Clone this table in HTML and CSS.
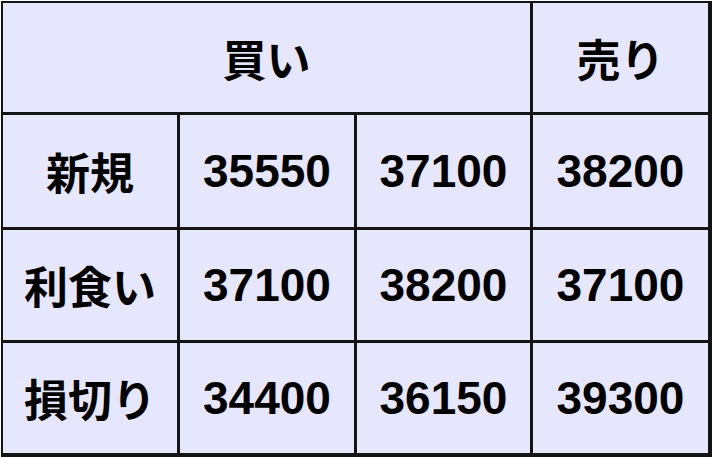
FILE: index.html
```html
<!DOCTYPE html>
<html lang="ja">
<head>
<meta charset="utf-8">
<link rel="stylesheet" href="styles.css">
</head>
<body>
<div class="table">
  <div class="cell head buy">買い</div>
  <div class="cell head">売り</div>
  <div class="cell label">新規</div>
  <div class="cell">35550</div>
  <div class="cell">37100</div>
  <div class="cell">38200</div>
  <div class="cell label">利食い</div>
  <div class="cell">37100</div>
  <div class="cell">38200</div>
  <div class="cell">37100</div>
  <div class="cell label">損切り</div>
  <div class="cell">34400</div>
  <div class="cell">36150</div>
  <div class="cell">39300</div>
</div>
</body>
</html>
```

FILE: styles.css
```css
html, body {
  margin: 0;
  padding: 0;
  background: #ffffff;
}
body {
  width: 712px;
  height: 457px;
  overflow: hidden;
}
.table {
  margin: 1px 0 0 1px;
  width: 711px;
  height: 456px;
  box-sizing: border-box;
  background: #141414;
  padding: 2px 4px 4px 2px;
  display: grid;
  grid-template-columns: 174px 174px 173px 175px;
  grid-template-rows: 109px 112px 110px 110px;
  gap: 3px;
  font-family: "Liberation Sans", "Noto Sans CJK JP", sans-serif;
  font-weight: bold;
  font-size: 46px;
  color: #000;
}
.cell {
  background: #e6e6fc;
  display: flex;
  align-items: center;
  justify-content: center;
}
.buy {
  grid-column: span 3;
}
.head, .label {
  font-family: "Noto Sans CJK JP", sans-serif;
  font-size: 44px;
  font-weight: 700;
}
```
